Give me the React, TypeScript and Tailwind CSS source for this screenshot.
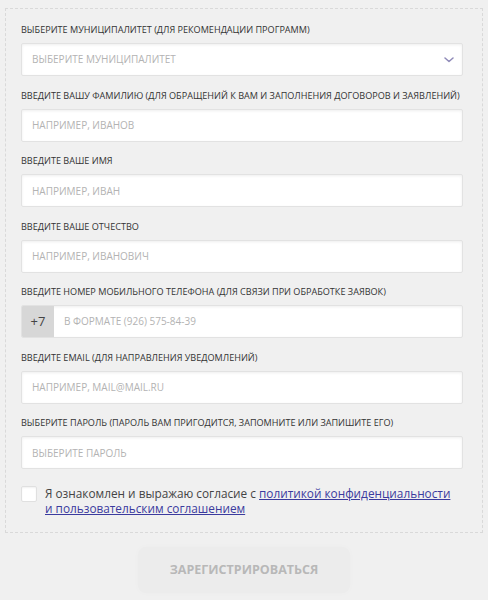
import React from "react";

const fields = [
  { label: "Введите вашу фамилию (для обращений к вам и заполнения договоров и заявлений)", placeholder: "Например, Иванов" },
  { label: "Введите ваше имя", placeholder: "Например, Иван" },
  { label: "Введите ваше отчество", placeholder: "Например, Иванович" },
];

const inputBox =
  "h-[33px] w-full bg-white border border-[#e2e2e2] shadow-[inset_0_1px_3px_rgba(0,0,0,0.07)] rounded-[2px]";

const Label = ({ children }: { children: React.ReactNode }) => (
  <div className="h-[12px] mb-[7px] text-[9.1px] leading-[12px] uppercase text-[#333] whitespace-nowrap">
    {children}
  </div>
);

export default function App() {
  return (
    <div className="min-h-[600px] bg-[#f0f0f0] pt-[8px] pl-[5px] pr-[5px] [font-family:'Open_Sans',sans-serif]">
      <div className="w-[478px] border border-dashed border-[#d9d9d9] pt-[15px] pb-[16px] pl-[15px] pr-[19px]">
        {/* Municipality */}
        <div>
          <Label>Выберите муниципалитет (для рекомендации программ)</Label>
          <div className={`${inputBox} flex items-center justify-between pl-[10px] pr-[8px]`}>
            <span className="text-[10px] uppercase text-[#b3b3b3]">Выберите муниципалитет</span>
            <svg width="10" height="6" viewBox="0 0 10 6" fill="none">
              <path d="M1 1l4 3.5L9 1" stroke="#8f8ab8" strokeWidth="1.5" strokeLinecap="round" strokeLinejoin="round" />
            </svg>
          </div>
        </div>

        {fields.map((f) => (
          <div key={f.label} className="mt-[13.5px]">
            <Label>{f.label}</Label>
            <input
              className={`${inputBox} px-[10px] text-[10px] uppercase outline-none placeholder:text-[#b3b3b3]`}
              placeholder={f.placeholder}
            />
          </div>
        ))}

        {/* Phone */}
        <div className="mt-[13.5px]">
          <Label>Введите номер мобильного телефона (для связи при обработке заявок)</Label>
          <div className={`${inputBox} flex overflow-hidden`}>
            <div className="w-[32px] h-full bg-[#d7d7d7] flex items-center justify-center text-[13px] text-[#444]">
              +7
            </div>
            <input
              className="flex-1 px-[10px] text-[10px] uppercase outline-none bg-transparent placeholder:text-[#b3b3b3]"
              placeholder="В формате (926) 575-84-39"
            />
          </div>
        </div>

        <div className="mt-[13.5px]">
          <Label>Введите email (для направления уведомлений)</Label>
          <input
            className={`${inputBox} px-[10px] text-[10px] uppercase outline-none placeholder:text-[#b3b3b3]`}
            placeholder="Например, mail@mail.ru"
          />
        </div>

        <div className="mt-[13.5px]">
          <Label>Выберите пароль (пароль вам пригодится, запомните или запишите его)</Label>
          <input
            type="password"
            className={`${inputBox} px-[10px] text-[10px] outline-none placeholder:uppercase placeholder:text-[#b3b3b3]`}
            placeholder="Выберите пароль"
          />
        </div>

        {/* Consent */}
        <div className="mt-[17px] flex items-start gap-[8px]">
          <div className="w-[16px] h-[16px] shrink-0 bg-white border border-[#e0e0e0] shadow-[inset_0_1px_2px_rgba(0,0,0,0.06)] rounded-[2px]" />
          <p className="w-[408px] text-[11.8px] leading-[15px] text-[#444]">
            Я ознакомлен и выражаю согласие с{" "}
            <a href="#" className="text-[#3b3b9e] underline">
              политикой конфиденциальности и пользовательским соглашением
            </a>
          </p>
        </div>
      </div>

      <div className="flex justify-center mt-[14px]">
        <button className="w-[212px] h-[46px] rounded-[8px] bg-[#ececec] shadow-[0_0_6px_rgba(0,0,0,0.02)] text-[12.5px] font-bold uppercase text-[#b8b8b8]">
          Зарегистрироваться
        </button>
      </div>
    </div>
  );
}
